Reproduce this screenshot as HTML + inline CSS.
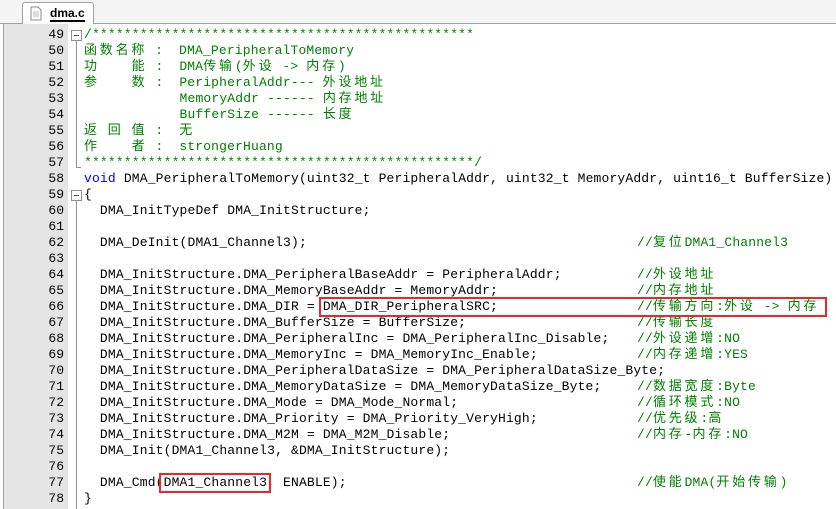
<!DOCTYPE html>
<html><head><meta charset="utf-8"><style>
body{margin:0;width:836px;height:509px;background:#fff;position:relative;overflow:hidden;font-family:"Liberation Mono","Noto Sans CJK SC",monospace;}
.tabbar{position:absolute;left:0;top:0;width:836px;height:23px;background:#f4f4f4;border-bottom:1px solid #a0a0a0;}
.tab{position:absolute;left:22px;top:2px;width:70px;height:21px;background:#fff;border:1px solid #a0a0a0;border-bottom:none;border-radius:3px 3px 0 0;}
.tab span{position:absolute;left:27px;top:3px;font:bold 12px "Liberation Sans",sans-serif;border-bottom:2px solid #000;line-height:14px}
.frame{position:absolute;left:3px;top:24px;width:833px;height:485px;border-left:1px solid #a0a0a0;}
.gut{position:absolute;left:4px;top:24px;width:64px;height:485px;background:#e4e4e4;}
.ln{position:absolute;left:4px;width:60px;text-align:right;font-size:13px;color:#000;line-height:16px}
.code{position:absolute;left:84px;height:16px;font-size:13px;letter-spacing:0.16px;line-height:16px;white-space:pre;color:#000}
.g{color:#008000}.b{color:#0000ff}
.z{letter-spacing:2.8px;font-family:"Noto Sans CJK SC",sans-serif;font-size:13px;line-height:0}
.cm{position:absolute;left:637px;height:16px;font-size:13px;letter-spacing:0.16px;line-height:16px;white-space:pre;color:#008000}
.box{position:absolute;border:2px solid #e8282c;}
.vl{position:absolute;left:76px;width:1px;background:#909090}
.fb{position:absolute;left:71px;width:9px;height:9px;border:1px solid #909090;background:#fff}
.fb:after{content:"";position:absolute;left:2px;top:4px;width:5px;height:1px;background:#555}
</style></head><body>
<div class="tabbar"><div class="tab"><svg style="position:absolute;left:7px;top:3px" width="12" height="15"><path d="M1 1h7l3 3v10H1z" fill="#fff" stroke="#889"/><path d="M3 6h6M3 8h6M3 10h6" stroke="#bbc"/></svg><span>dma.c</span></div></div>
<div class="frame"></div>
<div class="gut"></div>
<div class="vl" style="top:40px;height:128px"></div>
<div class="vl" style="top:200px;height:309px"></div>
<div style="position:absolute;left:76px;top:167px;width:5px;height:1px;background:#909090"></div>
<div class="fb" style="top:30px"></div>
<div class="fb" style="top:190px"></div>
<div class="ln" style="top:27px">49</div><div class="ln" style="top:43px">50</div><div class="ln" style="top:59px">51</div><div class="ln" style="top:75px">52</div><div class="ln" style="top:91px">53</div><div class="ln" style="top:107px">54</div><div class="ln" style="top:123px">55</div><div class="ln" style="top:139px">56</div><div class="ln" style="top:155px">57</div><div class="ln" style="top:171px">58</div><div class="ln" style="top:187px">59</div><div class="ln" style="top:203px">60</div><div class="ln" style="top:219px">61</div><div class="ln" style="top:235px">62</div><div class="ln" style="top:251px">63</div><div class="ln" style="top:267px">64</div><div class="ln" style="top:283px">65</div><div class="ln" style="top:299px">66</div><div class="ln" style="top:315px">67</div><div class="ln" style="top:331px">68</div><div class="ln" style="top:347px">69</div><div class="ln" style="top:363px">70</div><div class="ln" style="top:379px">71</div><div class="ln" style="top:395px">72</div><div class="ln" style="top:411px">73</div><div class="ln" style="top:427px">74</div><div class="ln" style="top:443px">75</div><div class="ln" style="top:459px">76</div><div class="ln" style="top:475px">77</div><div class="ln" style="top:491px">78</div>

<div class="code g" style="top:27px">/************************************************</div>
<div class="code g" style="top:43px"><span class="z">函数名称</span> :  DMA_PeripheralToMemory</div>
<div class="code g" style="top:59px"><span class="z">功</span>    <span class="z">能</span> :  DMA<span class="z">传输</span>(<span class="z">外设</span> -&gt; <span class="z">内存</span>)</div>
<div class="code g" style="top:75px"><span class="z">参</span>    <span class="z">数</span> :  PeripheralAddr--- <span class="z">外设地址</span></div>
<div class="code g" style="top:91px">            MemoryAddr ------ <span class="z">内存地址</span></div>
<div class="code g" style="top:107px">            BufferSize ------ <span class="z">长度</span></div>
<div class="code g" style="top:123px"><span class="z">返</span> <span class="z">回</span> <span class="z">值</span> :  <span class="z">无</span></div>
<div class="code g" style="top:139px"><span class="z">作</span>    <span class="z">者</span> :  strongerHuang</div>
<div class="code g" style="top:155px">*************************************************/</div>
<div class="code" style="top:171px"><span class="b">void</span> DMA_PeripheralToMemory(uint32_t PeripheralAddr, uint32_t MemoryAddr, uint16_t BufferSize)</div>
<div class="code" style="top:187px">{</div>
<div class="code" style="top:203px">  DMA_InitTypeDef DMA_InitStructure;</div>
<div class="code" style="top:235px">  DMA_DeInit(DMA1_Channel3);</div>
<div class="code" style="top:267px">  DMA_InitStructure.DMA_PeripheralBaseAddr = PeripheralAddr;</div>
<div class="code" style="top:283px">  DMA_InitStructure.DMA_MemoryBaseAddr = MemoryAddr;</div>
<div class="code" style="top:299px">  DMA_InitStructure.DMA_DIR = DMA_DIR_PeripheralSRC;</div>
<div class="code" style="top:315px">  DMA_InitStructure.DMA_BufferSize = BufferSize;</div>
<div class="code" style="top:331px">  DMA_InitStructure.DMA_PeripheralInc = DMA_PeripheralInc_Disable;</div>
<div class="code" style="top:347px">  DMA_InitStructure.DMA_MemoryInc = DMA_MemoryInc_Enable;</div>
<div class="code" style="top:363px">  DMA_InitStructure.DMA_PeripheralDataSize = DMA_PeripheralDataSize_Byte;</div>
<div class="code" style="top:379px">  DMA_InitStructure.DMA_MemoryDataSize = DMA_MemoryDataSize_Byte;</div>
<div class="code" style="top:395px">  DMA_InitStructure.DMA_Mode = DMA_Mode_Normal;</div>
<div class="code" style="top:411px">  DMA_InitStructure.DMA_Priority = DMA_Priority_VeryHigh;</div>
<div class="code" style="top:427px">  DMA_InitStructure.DMA_M2M = DMA_M2M_Disable;</div>
<div class="code" style="top:443px">  DMA_Init(DMA1_Channel3, &amp;DMA_InitStructure);</div>
<div class="code" style="top:475px">  DMA_Cmd(DMA1_Channel3, ENABLE);</div>
<div class="code" style="top:491px">}</div>

<div class="cm" style="top:235px">//<span class="z">复位</span>DMA1_Channel3</div>
<div class="cm" style="top:267px">//<span class="z">外设地址</span></div>
<div class="cm" style="top:283px">//<span class="z">内存地址</span></div>
<div class="cm" style="top:299px">//<span class="z">传输方向</span>:<span class="z">外设</span> -&gt; <span class="z">内存</span></div>
<div class="cm" style="top:315px">//<span class="z">传输长度</span></div>
<div class="cm" style="top:331px">//<span class="z">外设递增</span>:NO</div>
<div class="cm" style="top:347px">//<span class="z">内存递增</span>:YES</div>
<div class="cm" style="top:379px">//<span class="z">数据宽度</span>:Byte</div>
<div class="cm" style="top:395px">//<span class="z">循环模式</span>:NO</div>
<div class="cm" style="top:411px">//<span class="z">优先级</span>:<span class="z">高</span></div>
<div class="cm" style="top:427px">//<span class="z">内存</span>-<span class="z">内存</span>:NO</div>
<div class="cm" style="top:475px">//<span class="z">使能</span>DMA(<span class="z">开始传输</span>)</div>

<div class="box" style="left:319px;top:297px;width:504px;height:16px"></div>
<div class="box" style="left:159px;top:473px;width:108px;height:16px"></div>
</body></html>
